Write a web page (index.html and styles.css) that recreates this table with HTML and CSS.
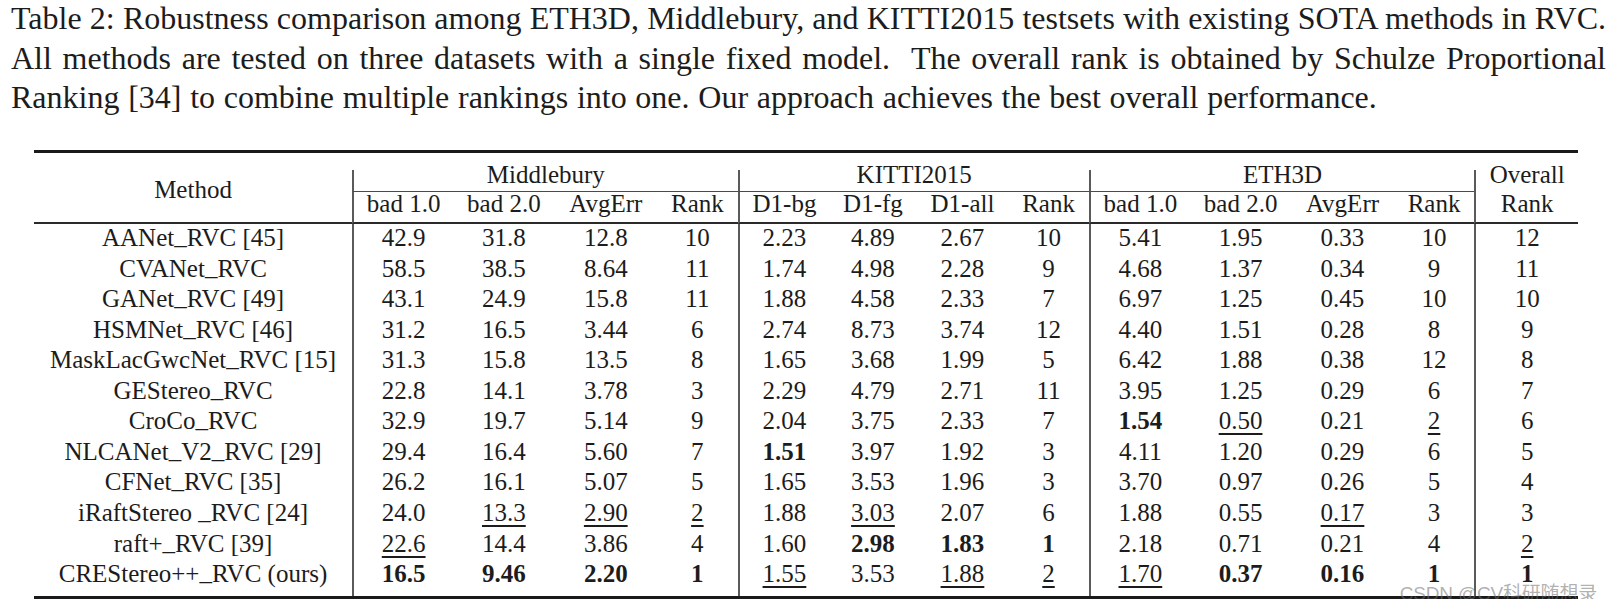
FILE: index.html
```html
<!DOCTYPE html>
<html>
<head>
<meta charset="utf-8">
<link rel="stylesheet" href="styles.css">
</head>
<body>
<div class="page">
  <div class="caption">
    <span class="cline just">Table 2: Robustness comparison among ETH3D, Middlebury, and KITTI2015 testsets with existing SOTA methods in RVC.</span>
    <span class="cline just">All methods are tested on three datasets with a single fixed model.&nbsp; The overall rank is obtained by Schulze Proportional</span>
    <span class="cline lastline">Ranking [34] to combine multiple rankings into one. Our approach achieves the best overall performance.</span>
  </div>

  <div class="tablewrap">
    <table class="results">
      <colgroup>
        <col class="c-method">
        <col class="c-101"><col class="c-101"><col class="c-103"><col class="c-80">
        <col class="c-92"><col class="c-87"><col class="c-92"><col class="c-80">
        <col class="c-101"><col class="c-101"><col class="c-103"><col class="c-80">
        <col class="c-overall">
      </colgroup>
      <thead>
        <tr class="h1">
          <th class="method-h" rowspan="2">Method</th>
          <th class="grp vl" colspan="4">Middlebury</th>
          <th class="grp vl" colspan="4">KITTI2015</th>
          <th class="grp vl" colspan="4">ETH3D</th>
          <th class="vl">Overall</th>
        </tr>
        <tr class="h2">
          <th class="vl">bad 1.0</th><th>bad 2.0</th><th>AvgErr</th><th>Rank</th>
          <th class="vl">D1-bg</th><th>D1-fg</th><th>D1-all</th><th>Rank</th>
          <th class="vl">bad 1.0</th><th>bad 2.0</th><th>AvgErr</th><th>Rank</th>
          <th class="vl">Rank</th>
        </tr>
      </thead>
      <tbody>
        <tr>
          <td>AANet<span class="us">_</span>RVC [45]</td>
          <td class="vl">42.9</td><td>31.8</td><td>12.8</td><td>10</td>
          <td class="vl">2.23</td><td>4.89</td><td>2.67</td><td>10</td>
          <td class="vl">5.41</td><td>1.95</td><td>0.33</td><td>10</td>
          <td class="vl">12</td>
        </tr>
        <tr>
          <td>CVANet<span class="us">_</span>RVC</td>
          <td class="vl">58.5</td><td>38.5</td><td>8.64</td><td>11</td>
          <td class="vl">1.74</td><td>4.98</td><td>2.28</td><td>9</td>
          <td class="vl">4.68</td><td>1.37</td><td>0.34</td><td>9</td>
          <td class="vl">11</td>
        </tr>
        <tr>
          <td>GANet<span class="us">_</span>RVC [49]</td>
          <td class="vl">43.1</td><td>24.9</td><td>15.8</td><td>11</td>
          <td class="vl">1.88</td><td>4.58</td><td>2.33</td><td>7</td>
          <td class="vl">6.97</td><td>1.25</td><td>0.45</td><td>10</td>
          <td class="vl">10</td>
        </tr>
        <tr>
          <td>HSMNet<span class="us">_</span>RVC [46]</td>
          <td class="vl">31.2</td><td>16.5</td><td>3.44</td><td>6</td>
          <td class="vl">2.74</td><td>8.73</td><td>3.74</td><td>12</td>
          <td class="vl">4.40</td><td>1.51</td><td>0.28</td><td>8</td>
          <td class="vl">9</td>
        </tr>
        <tr>
          <td>MaskLacGwcNet<span class="us">_</span>RVC [15]</td>
          <td class="vl">31.3</td><td>15.8</td><td>13.5</td><td>8</td>
          <td class="vl">1.65</td><td>3.68</td><td>1.99</td><td>5</td>
          <td class="vl">6.42</td><td>1.88</td><td>0.38</td><td>12</td>
          <td class="vl">8</td>
        </tr>
        <tr>
          <td>GEStereo<span class="us">_</span>RVC</td>
          <td class="vl">22.8</td><td>14.1</td><td>3.78</td><td>3</td>
          <td class="vl">2.29</td><td>4.79</td><td>2.71</td><td>11</td>
          <td class="vl">3.95</td><td>1.25</td><td>0.29</td><td>6</td>
          <td class="vl">7</td>
        </tr>
        <tr>
          <td>CroCo<span class="us">_</span>RVC</td>
          <td class="vl">32.9</td><td>19.7</td><td>5.14</td><td>9</td>
          <td class="vl">2.04</td><td>3.75</td><td>2.33</td><td>7</td>
          <td class="vl"><b>1.54</b></td><td><u>0.50</u></td><td>0.21</td><td><u>2</u></td>
          <td class="vl">6</td>
        </tr>
        <tr>
          <td>NLCANet<span class="us">_</span>V2<span class="us">_</span>RVC [29]</td>
          <td class="vl">29.4</td><td>16.4</td><td>5.60</td><td>7</td>
          <td class="vl"><b>1.51</b></td><td>3.97</td><td>1.92</td><td>3</td>
          <td class="vl">4.11</td><td>1.20</td><td>0.29</td><td>6</td>
          <td class="vl">5</td>
        </tr>
        <tr>
          <td>CFNet<span class="us">_</span>RVC [35]</td>
          <td class="vl">26.2</td><td>16.1</td><td>5.07</td><td>5</td>
          <td class="vl">1.65</td><td>3.53</td><td>1.96</td><td>3</td>
          <td class="vl">3.70</td><td>0.97</td><td>0.26</td><td>5</td>
          <td class="vl">4</td>
        </tr>
        <tr>
          <td>iRaftStereo <span class="us">_</span>RVC [24]</td>
          <td class="vl">24.0</td><td><u>13.3</u></td><td><u>2.90</u></td><td><u>2</u></td>
          <td class="vl">1.88</td><td><u>3.03</u></td><td>2.07</td><td>6</td>
          <td class="vl">1.88</td><td>0.55</td><td><u>0.17</u></td><td>3</td>
          <td class="vl">3</td>
        </tr>
        <tr>
          <td>raft+<span class="us">_</span>RVC [39]</td>
          <td class="vl"><u>22.6</u></td><td>14.4</td><td>3.86</td><td>4</td>
          <td class="vl">1.60</td><td><b>2.98</b></td><td><b>1.83</b></td><td><b>1</b></td>
          <td class="vl">2.18</td><td>0.71</td><td>0.21</td><td>4</td>
          <td class="vl"><u>2</u></td>
        </tr>
        <tr class="last">
          <td>CREStereo++<span class="us">_</span>RVC (ours)</td>
          <td class="vl"><b>16.5</b></td><td><b>9.46</b></td><td><b>2.20</b></td><td><b>1</b></td>
          <td class="vl"><u>1.55</u></td><td>3.53</td><td><u>1.88</u></td><td><u>2</u></td>
          <td class="vl"><u>1.70</u></td><td><b>0.37</b></td><td><b>0.16</b></td><td><b>1</b></td>
          <td class="vl"><b>1</b></td>
        </tr>
      </tbody>
    </table>
    <div class="watermark">CSDN @CV科研随想录</div>
  </div>
</div>
</body>
</html>
```

FILE: styles.css
```css
html, body {
  margin: 0;
  padding: 0;
  background: #ffffff;
}

.page {
  width: 1614px;
  font-family: "Liberation Serif", "Times New Roman", serif;
  color: #1c1c1c;
}

.caption {
  margin: -1px 8px 0 11px;
  font-size: 32px;
  line-height: 39.5px;
}

.cline {
  display: block;
  white-space: nowrap;
}

.cline.just {
  white-space: normal;
  text-align: justify;
  text-align-last: justify;
}

.cline.lastline {
  word-spacing: 0.7px;
}

.tablewrap {
  position: relative;
  margin: 32.7px 0 0 34px;
  width: 1544px;
  border-top: 3px solid #1a1a1a;
  border-bottom: 3px solid #1a1a1a;
  padding-top: 16.5px;
}

.results {
  width: 1544px;
  table-layout: fixed;
  border-collapse: separate;
  border-spacing: 0;
  font-size: 25px;
}

.c-method { width: 318px; }
.c-101 { width: 101.2px; }
.c-103 { width: 102.6px; }
.c-80 { width: 80.5px; }
.c-92 { width: 91.6px; }
.c-87 { width: 87.4px; }
.c-overall { width: 103.6px; }

.results th,
.results td {
  padding: 0 0 3.57px 0;
  line-height: 27px;
  text-align: center;
  font-weight: normal;
  white-space: nowrap;
  vertical-align: baseline;
}

.results .vl {
  border-left: 2px solid #5a5a5a;
}

.results .h1 th {
  line-height: 10px;
  padding-bottom: 11.8px;
}

.results .h1 th.grp {
  border-bottom: 1px solid #4a4a4a;
}

.results .h1 th.method-h {
  line-height: 27px;
  vertical-align: top;
  padding: 6.7px 0 0 0;
  border-bottom: 2px solid #2a2a2a;
}

.results .h2 th {
  line-height: 24px;
  padding-bottom: 5.5px;
  border-bottom: 2px solid #2a2a2a;
}

.results .last td {
  padding-bottom: 8.5px;
}

.results .us {
  vertical-align: 0.1em;
  line-height: 0;
}

.results u {
  text-decoration: underline;
  text-decoration-thickness: 1.5px;
  text-underline-offset: 4px;
}

.results b {
  font-weight: bold;
}

.watermark {
  position: absolute;
  right: -19px;
  bottom: -6px;
  font-family: "Liberation Sans", "Noto Sans CJK SC", sans-serif;
  font-size: 19px;
  letter-spacing: -0.2px;
  line-height: 16px;
  color: rgba(110, 110, 110, 0.55);
  white-space: nowrap;
}
```
